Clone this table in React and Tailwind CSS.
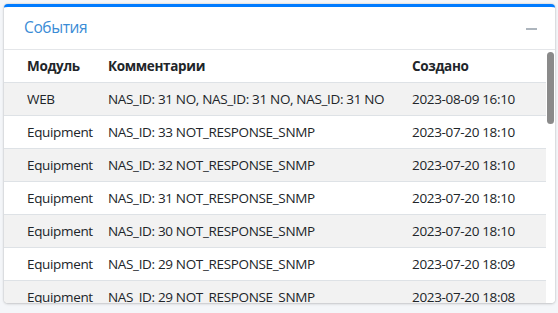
import React from 'react';

const rows = [
  { module: 'WEB', comment: 'NAS_ID: 31 NO, NAS_ID: 31 NO, NAS_ID: 31 NO', created: '2023-08-09 16:10' },
  { module: 'Equipment', comment: 'NAS_ID: 33 NOT_RESPONSE_SNMP', created: '2023-07-20 18:10' },
  { module: 'Equipment', comment: 'NAS_ID: 32 NOT_RESPONSE_SNMP', created: '2023-07-20 18:10' },
  { module: 'Equipment', comment: 'NAS_ID: 31 NOT_RESPONSE_SNMP', created: '2023-07-20 18:10' },
  { module: 'Equipment', comment: 'NAS_ID: 30 NOT_RESPONSE_SNMP', created: '2023-07-20 18:10' },
  { module: 'Equipment', comment: 'NAS_ID: 29 NOT_RESPONSE_SNMP', created: '2023-07-20 18:09' },
  { module: 'Equipment', comment: 'NAS_ID: 29 NOT_RESPONSE_SNMP', created: '2023-07-20 18:08' },
  { module: 'Equipment', comment: 'NAS_ID: 28 NOT_RESPONSE_SNMP', created: '2023-07-20 18:08' },
  { module: 'Equipment', comment: 'NAS_ID: 27 NOT_RESPONSE_SNMP', created: '2023-07-20 18:07' },
];

export default function App() {
  return (
    <div
      className="w-[558px] h-[313px] bg-[#f4f6f9] pt-[4px] px-[4px] overflow-hidden"
      style={{ fontFamily: '"Open Sans", "Noto Sans", sans-serif' }}
    >
      {/* карточка событий */}
      <div className="w-[551px] h-[299px] bg-white rounded-[4px] border-t-[3px] border-[#007bff] shadow-[0_0_2px_rgba(0,0,0,0.2),0_1px_3px_rgba(0,0,0,0.15)] flex flex-col overflow-hidden">
        <div className="h-[43px] flex items-center justify-between pl-[20px] pr-[18px] border-b border-[#e4e6e9] shrink-0">
          <span className="text-[15.5px] text-[#3a8cd6] tracking-tight">События</span>
          <span className="block w-[11px] h-[2px] bg-[#adb5bd] mt-[2px]" />
        </div>

        <div className="flex-1 flex min-h-0">
          <div className="flex-1 overflow-hidden text-[13.5px] text-[#212529] tracking-tight">
            <div className="grid grid-cols-[81px_304px_1fr] pl-[23px] h-[33px] items-center border-b border-[#dee2e6] font-bold">
              <span>Модуль</span>
              <span>Комментарии</span>
              <span>Создано</span>
            </div>
            {rows.map((r, i) => (
              <div
                key={i}
                className={
                  'grid grid-cols-[81px_304px_1fr] pl-[23px] h-[33px] items-center border-b border-[#dee2e6] whitespace-nowrap ' +
                  (i % 2 === 0 ? 'bg-[#f2f2f2]' : 'bg-white')
                }
              >
                <span>{r.module}</span>
                <span>{r.comment}</span>
                <span>{r.created}</span>
              </div>
            ))}
          </div>
          {/* полоса прокрутки */}
          <div className="w-[9px] shrink-0 bg-white pt-[2px] pl-[1px] pr-[1px]">
            <div className="h-[72px] w-[7px] rounded-full bg-[#8a8a8a]" />
          </div>
        </div>
      </div>
    </div>
  );
}
